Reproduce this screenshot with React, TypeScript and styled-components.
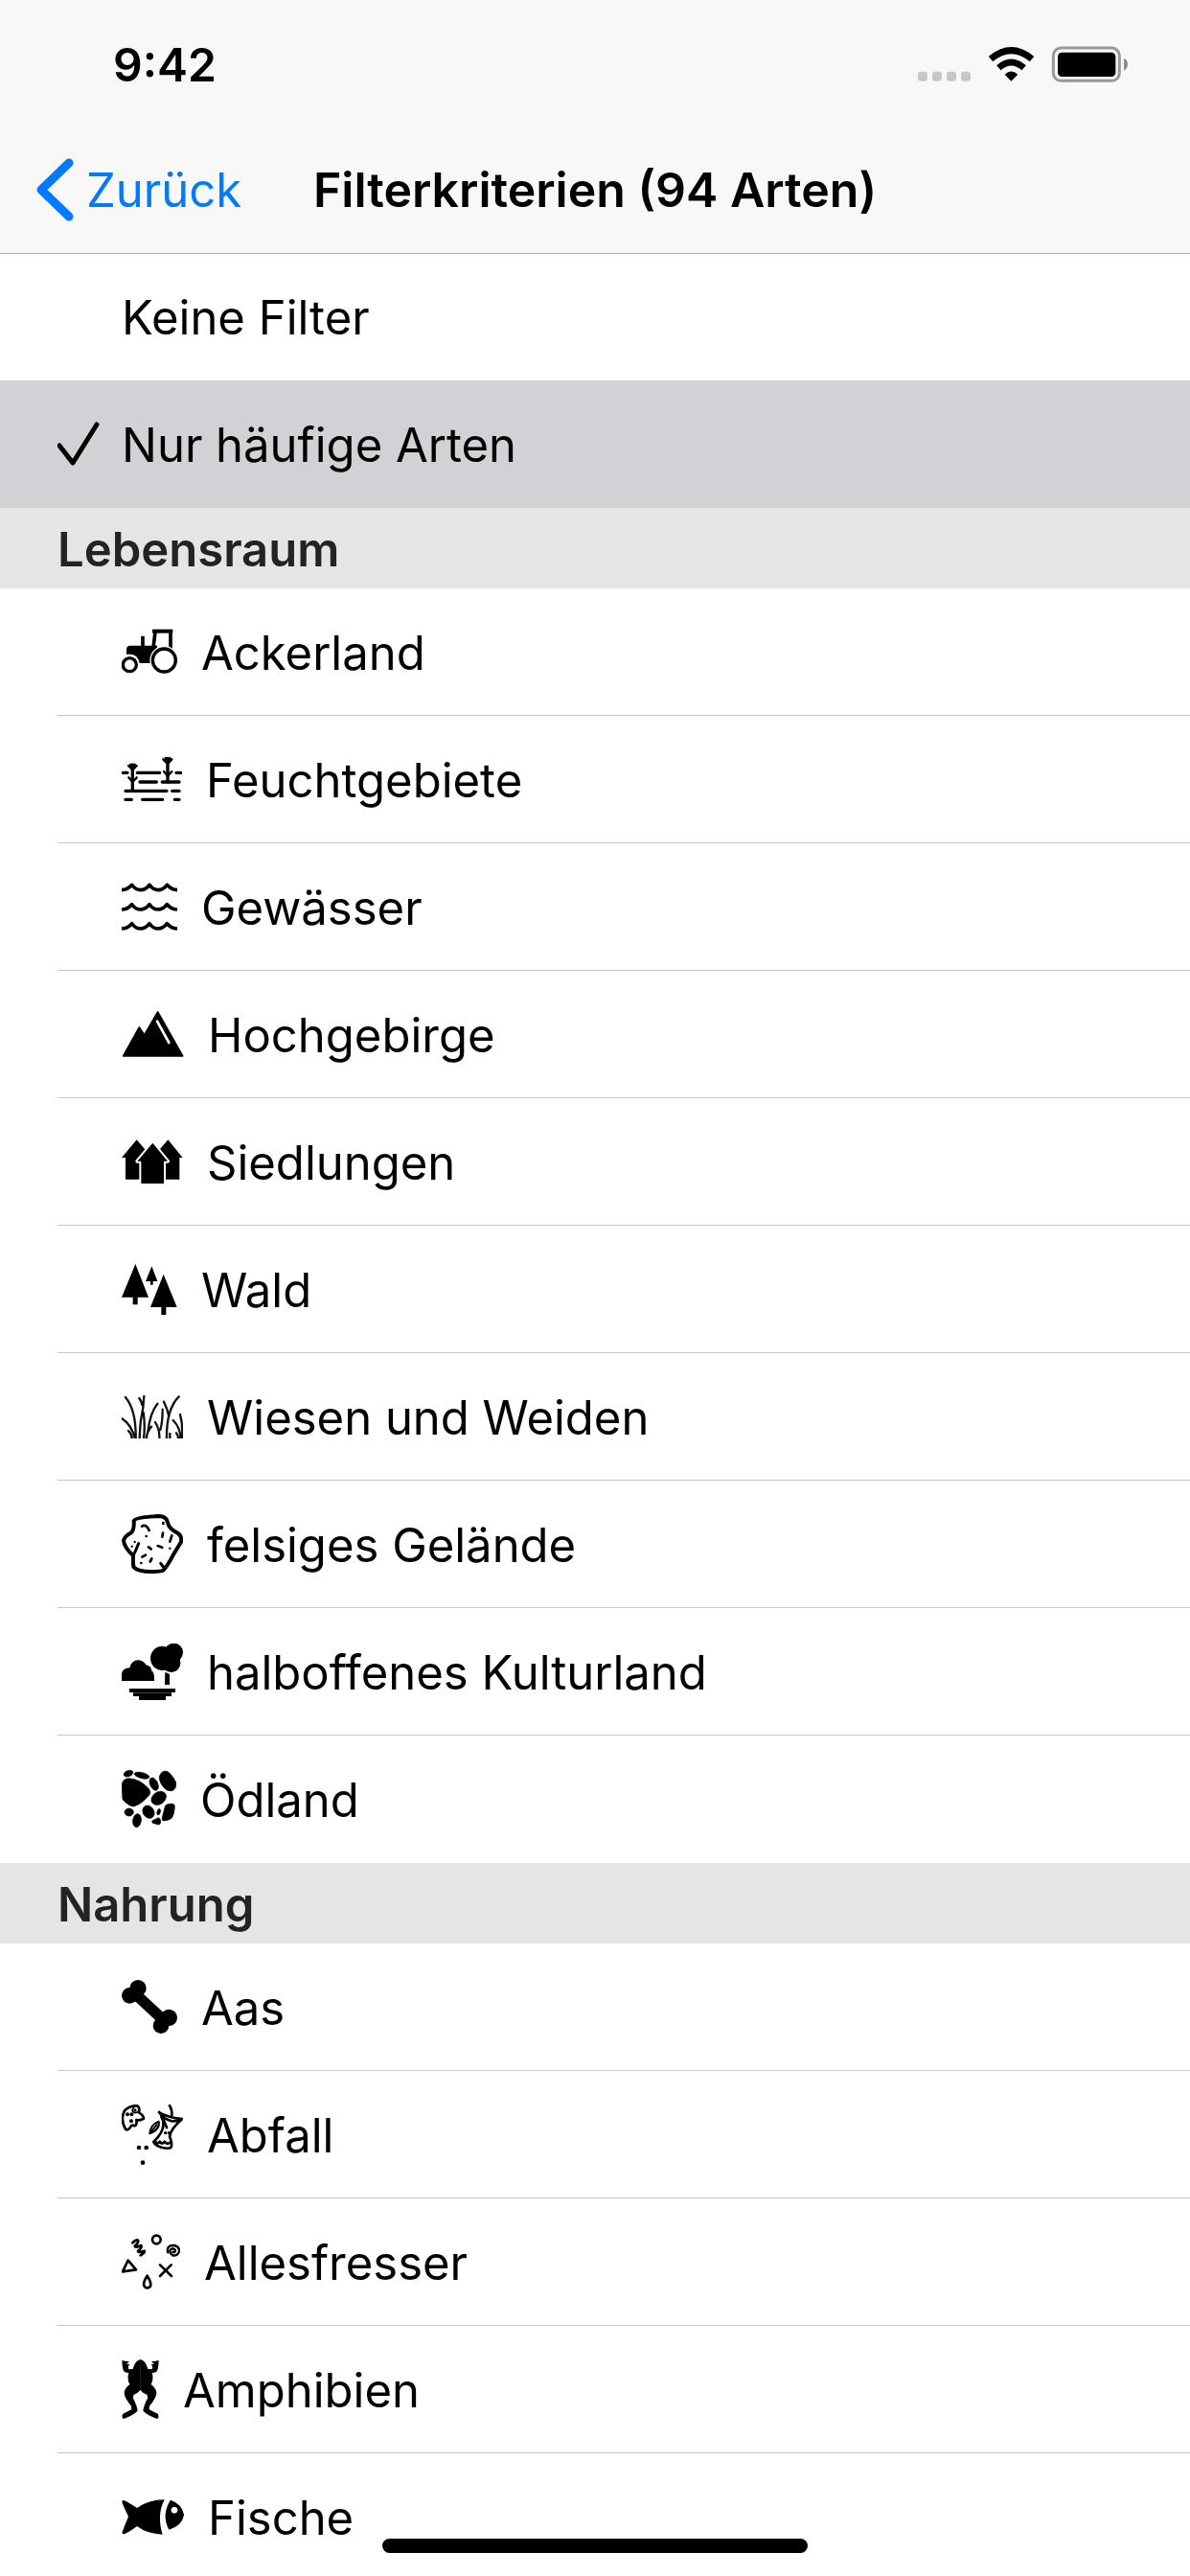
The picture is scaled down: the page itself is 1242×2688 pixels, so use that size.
import React, { useState } from "react";
import styled, { createGlobalStyle } from "styled-components";

const GlobalStyle = createGlobalStyle`
  * { box-sizing: border-box; }
  body {
    margin: 0;
    background: #ffffff;
    color: #000000;
    font-family: Inter, "Liberation Sans", sans-serif;
  }
  button { font: inherit; color: inherit; background: none; border: 0; margin: 0; }
`;

const Screen = styled.div`
  position: relative;
  display: flex;
  flex-direction: column;
  height: 100vh;
  overflow: hidden;
`;

const Header = styled.header`
  flex: none;
  position: relative;
  z-index: 1;
  background: #f8f8f8;
  box-shadow: 0 1px 0 #b2b2b2;
`;

const StatusBar = styled.div`
  display: flex;
  align-items: center;
  justify-content: space-between;
  height: 132px;
  padding: 2px 64px 0 118px;
`;

const Clock = styled.time`
  font-size: 48px;
  font-weight: 600;
`;

const NavBar = styled.div`
  display: grid;
  grid-template-columns: 1fr auto 1fr;
  align-items: center;
  height: 132px;
  padding: 0 36px;
`;

const BackButton = styled.button`
  display: flex;
  align-items: center;
  justify-self: start;
  gap: 13px;
  padding: 0;
  font-size: 49px;
  color: #007aff;
`;

const Title = styled.h1`
  margin: 0;
  font-size: 50px;
  font-weight: 600;
`;

const Content = styled.main`
  flex: 1;
  min-height: 0;
  overflow-y: auto;
  scrollbar-width: none;
`;

const List = styled.ul`
  margin: 0;
  padding: 0;
  list-style: none;
`;

const SectionTitle = styled.h2`
  display: flex;
  align-items: center;
  height: 84px;
  margin: 0;
  padding: 2px 60px 0;
  background: #e5e5e5;
  color: #232323;
  font-size: 49px;
  font-weight: 600;
`;

const Row = styled.li<{ $selected: boolean }>`
  padding-left: 60px;
  background: ${(p) => (p.$selected ? "#d1d1d6" : "#ffffff")};
`;

const RowButton = styled.button<{ $divided: boolean }>`
  display: grid;
  grid-template-columns: 67px 1fr;
  align-items: center;
  width: 100%;
  height: 133px;
  padding: 0;
  border-bottom: 1px solid ${(p) => (p.$divided ? "#c6c6c8" : "transparent")};
  text-align: left;
`;

const RowBody = styled.span`
  grid-column: 2;
  display: flex;
  align-items: center;
  gap: 25px;
`;

const RowLabel = styled.span`
  padding-top: 2px;
  font-size: 49px;
  white-space: nowrap;
`;

const Glyph = styled.svg`
  flex: none;
  display: block;
`;

const HomeIndicator = styled.div`
  position: absolute;
  left: 50%;
  bottom: 24px;
  width: 444px;
  height: 15px;
  border-radius: 8px;
  background: #000000;
  transform: translateX(-50%);
`;

type Box = [number, number, number, number];

/* Habitat and food drawings use three units per pixel. */
const icons: Record<string, { box: Box; art: React.ReactNode }> = {
  tractor: {
    box: [81, 108, 174, 144],
    art: (
      <>
        <path d="M96 188V173q0-12 12-12H192V216H137Q132 188 106 188Z" />
        <path d="M177 110H241V122H177Z" />
        <path d="M186 118 180 168M234 118V176M147 131V165" fill="none" stroke="#000" strokeWidth="11" />
        <circle cx="214" cy="207" r="45" fill="#fff" />
        <circle cx="214" cy="207" r="36" fill="none" stroke="#000" strokeWidth="10" />
        <circle cx="106" cy="221" r="21" fill="none" stroke="#000" strokeWidth="10" />
      </>
    ),
  },
  wetland: {
    box: [81, 507, 189, 144],
    art: (
      <g fill="none" stroke="#000" strokeWidth="10" strokeLinecap="round">
        <path d="M85 559H99M130 559H200M252 559H266M138 588H190M208 588H261M93 616H222M239 616H261M93 643H112M146 643H209M247 643H261" />
        <path d="M115 534V614M225 514V588" />
        <path strokeWidth="7" d="M102 537 115 550 128 537M108 533 115 544 122 533M103 574 115 588 128 574M211 517 225 531 238 517M218 513 225 524 232 513M213 555 225 569 238 555" />
      </g>
    ),
  },
  waves: {
    box: [81, 124, 174, 150],
    art: (
      <g fill="none" stroke="#000" strokeWidth="11" strokeLinejoin="round">
        {[0, 61, 121].map((dy) => (
          <path
            key={dy}
            transform={`translate(0 ${dy})`}
            d="M78 147Q98 148 113 131Q124 147 140 147Q156 147 168 131Q179 147 195 147Q211 147 223 131Q238 148 258 147"
          />
        ))}
      </g>
    ),
  },
  mountain: {
    box: [81, 525, 195, 144],
    art: (
      <>
        <path d="M86 666 136 576 152 600 194 528 272 666Z" stroke="#000" strokeWidth="5" strokeLinejoin="round" />
        <path d="M192 557 229 624" stroke="#fff" strokeWidth="8" strokeLinecap="round" />
      </>
    ),
  },
  houses: {
    box: [81, 147, 192, 138],
    art: (
      <>
        <path d="M81 204 128 148 176 204H165V272H93V204ZM178 204 226 148 272 204H262V272H190V204Z" />
        <path
          d="M130 215 178 158 225 215H213V285H142V215Z"
          stroke="#fff"
          strokeWidth="12"
          strokeLinejoin="round"
          paintOrder="stroke"
        />
      </>
    ),
  },
  forest: {
    box: [81, 538, 174, 159],
    art: (
      <path d="M124 538 165 642H131V665H116V642H81ZM175 545 193 592H179V603H171V592H156ZM212 570 254 673H220V697H205V673H171Z" />
    ),
  },
  grass: {
    box: [81, 168, 192, 135],
    art: (
      <path
        fill="none"
        stroke="#111"
        strokeWidth="7"
        strokeLinecap="round"
        d="M93 174Q127 215 125 305M136 177Q143 186 145 198M151 170Q150 205 141 245Q138 270 137 305M149 222Q155 262 150 305M82 241Q112 260 123 305M102 279Q113 289 113 305M193 194Q170 222 163 282M174 266Q158 284 159 305M209 212Q209 252 202 276M186 252Q201 276 199 305M213 188Q224 210 229 234M260 172Q220 212 222 305M232 288V305M242 246Q266 270 265 305M264 228Q273 260 270 305M252 286Q259 294 258 305"
      />
    ),
  },
  rock: {
    box: [81, 539, 192, 186],
    art: (
      <g fill="none" stroke="#000" strokeLinecap="round" strokeLinejoin="round">
        <path
          strokeWidth="12"
          d="M119 560Q123 549 195 545Q216 545 222 557L229 576Q240 591 256 598Q270 606 267 626L241 669Q225 700 211 715Q205 719 175 719Q130 719 118 704Q116 690 117 669Q87 641 87 621Q91 608 111 597Q121 588 119 560Z"
        />
        <path strokeWidth="9" d="M118 668 134 631M203 693 211 704" />
        <path
          strokeWidth="8"
          d="M144 577Q159 569 167 590M211 566V569M158 608V608M210 598 208 610M238 606 232 625M165 642 173 648M194 638 208 643M145 673 156 667M175 678 170 688M142 692V692"
        />
        <path strokeWidth="7" d="M122 626V626M113 640V640M232 646V646" />
      </g>
    ),
  },
  meadow: {
    box: [81, 135, 192, 177],
    art: (
      <>
        <path d="M81 252V229Q84 212 106 211Q112 187 133 187Q150 188 157 202Q173 204 175 220Q184 225 183 252Z" />
        <ellipse cx="208" cy="181" rx="37" ry="38" />
        <circle cx="244" cy="163" r="29" />
        <circle cx="236" cy="196" r="29" />
        <path d="M217 224 231 231V264H216ZM105 276H249V288H105ZM117 289H237V300H117ZM135 300H219V312H135Z" />
      </>
    ),
  },
  gravel: {
    box: [81, 534, 171, 180],
    art: (
      <g stroke="#000" strokeWidth="2">
        <ellipse cx="102" cy="545" rx="15" ry="9" transform="rotate(-20 102 545)" />
        <ellipse cx="144" cy="551" rx="24" ry="9" transform="rotate(14 144 551)" />
        <path d="M81 582Q84 560 104 560Q140 562 167 594Q173 605 167 613Q142 642 119 648Q104 648 84 626Z" />
        <ellipse cx="182" cy="578" rx="12" ry="21" transform="rotate(-25 182 578)" />
        <path d="M199 560Q199 540 218 537Q232 537 251 572Q254 592 239 599Q224 602 214 590Q200 575 199 560Z" />
        <ellipse cx="197" cy="622" rx="25" ry="19" transform="rotate(-35 197 622)" />
        <ellipse cx="104" cy="666" rx="14" ry="12" />
        <ellipse cx="165" cy="665" rx="17" ry="21" transform="rotate(-35 165 665)" />
        <path d="M217 647Q222 639 240 640Q248 641 247 650Q246 672 238 684Q228 693 211 693Q206 690 208 682Z" />
        <ellipse cx="129" cy="692" rx="13" ry="21" transform="rotate(8 129 692)" />
        <ellipse cx="197" cy="665" rx="5" ry="10" transform="rotate(15 197 665)" />
        <path d="M176 693 196 683Q204 686 203 698Q201 706 196 705L178 700Z" />
      </g>
    ),
  },
  bone: {
    box: [381, 408, 174, 168],
    art: (
      <>
        <circle cx="432" cy="434" r="26" />
        <circle cx="406" cy="457" r="25" />
        <circle cx="529" cy="526" r="26" />
        <circle cx="504" cy="551" r="25" />
        <path d="M425 453 512 534" stroke="#000" strokeWidth="34" />
      </>
    ),
  },
  waste: {
    box: [81, 198, 192, 189],
    art: (
      <>
        <g fill="none" stroke="#000" strokeWidth="8" strokeLinecap="round" strokeLinejoin="round">
          <path d="M90 217Q106 201 128 202Q139 206 135 223Q150 232 150 242Q140 249 127 246Q130 263 121 265Q112 260 109 268Q101 281 93 275Q80 253 85 230Z" />
          <path d="M119 207Q112 214 116 221Q126 228 134 219" strokeWidth="5" />
          <path d="M231 201Q241 218 237 236M198 222Q222 238 269 243Q258 251 238 250Q213 245 198 222M205 236Q226 272 181 315M268 246Q236 272 231 298Q240 318 236 331Q230 339 205 332Q185 326 181 316M186 314Q194 324 200 314Q209 326 215 314Q223 324 231 318M212 246 222 270" />
          <path d="M169 289Q170 262 197 251Q202 276 169 289M174 282 190 262" strokeWidth="6" />
        </g>
        <circle cx="123" cy="216" r="5" />
        <circle cx="99" cy="229" r="6" />
        <circle cx="112" cy="229" r="6" />
        <circle cx="111" cy="250" r="6" />
        <circle cx="218" cy="287" r="5" />
        <circle cx="229" cy="287" r="5" />
        <circle cx="135" cy="333" r="7" />
        <circle cx="158" cy="333" r="7" />
        <circle cx="147" cy="380" r="7" />
      </>
    ),
  },
  omnivore: {
    box: [81, 604, 183, 174],
    art: (
      <g fill="none" stroke="#000" strokeWidth="8" strokeLinecap="round" strokeLinejoin="round">
        <circle cx="190" cy="622" r="13" />
        <path d="M115 632Q130 618 133 626Q132 634 122 642Q123 649 142 640Q146 646 132 658Q131 664 152 657Q156 662 140 671" />
        <path d="M101 687 126 716 84 722Z" />
        <path d="M201 701 237 736M236 701 201 736" />
        <path d="M161 735Q150 752 150 762Q152 773 162 773Q173 772 172 761Q170 748 161 735Z" />
        <path d="M225 662Q221 640 243 640Q262 642 261 659Q256 674 240 671Q228 663 234 653Q243 647 249 655Q248 664 241 661" strokeWidth="7" />
      </g>
    ),
  },
  frog: {
    box: [81, 216, 117, 186],
    art: (
      <>
        {["", "matrix(-1 0 0 1 279 0)"].map((flip) => (
          <path
            key={flip}
            transform={flip || undefined}
            d="M139 216Q156 219 163 246L176 247Q180 237 173 231L183 231 174 222 184 222 197 219Q196 245 192 252Q186 259 176 258Q182 277 173 294Q190 307 190 322Q189 338 168 362L167 373 194 386Q200 397 192 402Q162 391 148 377Q150 360 163 336L160 326Q147 322 139 311Z"
          />
        ))}
      </>
    ),
  },
  fish: {
    box: [81, 654, 195, 111],
    art: (
      <>
        <path d="M87 657Q104 664 129 681Q165 655 215 655Q190 704 209 764Q160 762 129 738Q106 756 90 762Q81 765 83 756Q91 734 102 708Q92 687 83 666Q81 656 87 657Z" />
        <path d="M234 656Q270 668 276 703Q270 738 229 749Q204 702 234 656Z" />
        <circle cx="246" cy="688" r="10" fill="#fff" />
      </>
    ),
  },
};

function Icon({ name }: { name: string }) {
  const { box, art } = icons[name];
  return (
    <Glyph width={box[2] / 3} height={box[3] / 3} viewBox={box.join(" ")} aria-hidden="true">
      {art}
    </Glyph>
  );
}

function StatusIcons() {
  return (
    <Glyph width="220" height="38" viewBox="114 55 660 114" aria-hidden="true">
      {[114, 159, 204, 249].map((x) => (
        <rect key={x} x={x} y="135" width="30" height="30" rx="9" fill="#c7c7c7" />
      ))}
      <g fill="none" stroke="#000">
        <path d="M342 96Q406 42 471 96" strokeWidth="21" />
        <path d="M367 123Q406 89 446 123" strokeWidth="20" />
      </g>
      <path d="M386 144Q406 125 427 144L406 165Z" />
      <rect x="538" y="61" width="207" height="103" rx="24" fill="none" stroke="#999" strokeWidth="9" />
      <rect x="552" y="75" width="181" height="76" rx="13" />
      <path d="M759 93Q771 99 771 112Q771 126 759 132Z" fill="#8c8c8c" />
    </Glyph>
  );
}

interface Entry {
  label: string;
  icon?: string;
}

const general: Entry[] = [{ label: "Keine Filter" }, { label: "Nur häufige Arten" }];

const sections: { title: string; entries: Entry[] }[] = [
  {
    title: "Lebensraum",
    entries: [
      { label: "Ackerland", icon: "tractor" },
      { label: "Feuchtgebiete", icon: "wetland" },
      { label: "Gewässer", icon: "waves" },
      { label: "Hochgebirge", icon: "mountain" },
      { label: "Siedlungen", icon: "houses" },
      { label: "Wald", icon: "forest" },
      { label: "Wiesen und Weiden", icon: "grass" },
      { label: "felsiges Gelände", icon: "rock" },
      { label: "halboffenes Kulturland", icon: "meadow" },
      { label: "Ödland", icon: "gravel" },
    ],
  },
  {
    title: "Nahrung",
    entries: [
      { label: "Aas", icon: "bone" },
      { label: "Abfall", icon: "waste" },
      { label: "Allesfresser", icon: "omnivore" },
      { label: "Amphibien", icon: "frog" },
      { label: "Fische", icon: "fish" },
    ],
  },
];

interface FilterListProps {
  entries: Entry[];
  divided: boolean;
  selected: string;
  onSelect: (label: string) => void;
}

function FilterList({ entries, divided, selected, onSelect }: FilterListProps) {
  return (
    <List>
      {entries.map(({ label, icon }, i) => (
        <Row key={label} $selected={label === selected}>
          <RowButton
            type="button"
            aria-pressed={label === selected}
            $divided={divided && i < entries.length - 1}
            onClick={() => onSelect(label)}
          >
            {label === selected && (
              <Glyph width="44" height="46" viewBox="0 0 44 46" aria-hidden="true">
                <path d="M2 25 16 43 41 3" fill="none" stroke="#000" strokeWidth="5" strokeLinecap="round" strokeLinejoin="round" />
              </Glyph>
            )}
            <RowBody>
              {icon && <Icon name={icon} />}
              <RowLabel>{label}</RowLabel>
            </RowBody>
          </RowButton>
        </Row>
      ))}
    </List>
  );
}

export default function App() {
  const [selected, setSelected] = useState("Nur häufige Arten");

  return (
    <Screen>
      <GlobalStyle />
      <Header>
        <StatusBar>
          <Clock>9:42</Clock>
          <StatusIcons />
        </StatusBar>
        <NavBar>
          <BackButton type="button">
            <Glyph width="41" height="66" viewBox="0 0 41 66" aria-hidden="true">
              <path d="M36 5 7 33 36 61" fill="none" stroke="currentColor" strokeWidth="9" strokeLinecap="round" strokeLinejoin="round" />
            </Glyph>
            Zurück
          </BackButton>
          <Title>Filterkriterien (94 Arten)</Title>
        </NavBar>
      </Header>
      <Content>
        <FilterList entries={general} divided={false} selected={selected} onSelect={setSelected} />
        {sections.map(({ title, entries }) => (
          <section key={title}>
            <SectionTitle>{title}</SectionTitle>
            <FilterList entries={entries} divided selected={selected} onSelect={setSelected} />
          </section>
        ))}
      </Content>
      <HomeIndicator />
    </Screen>
  );
}
